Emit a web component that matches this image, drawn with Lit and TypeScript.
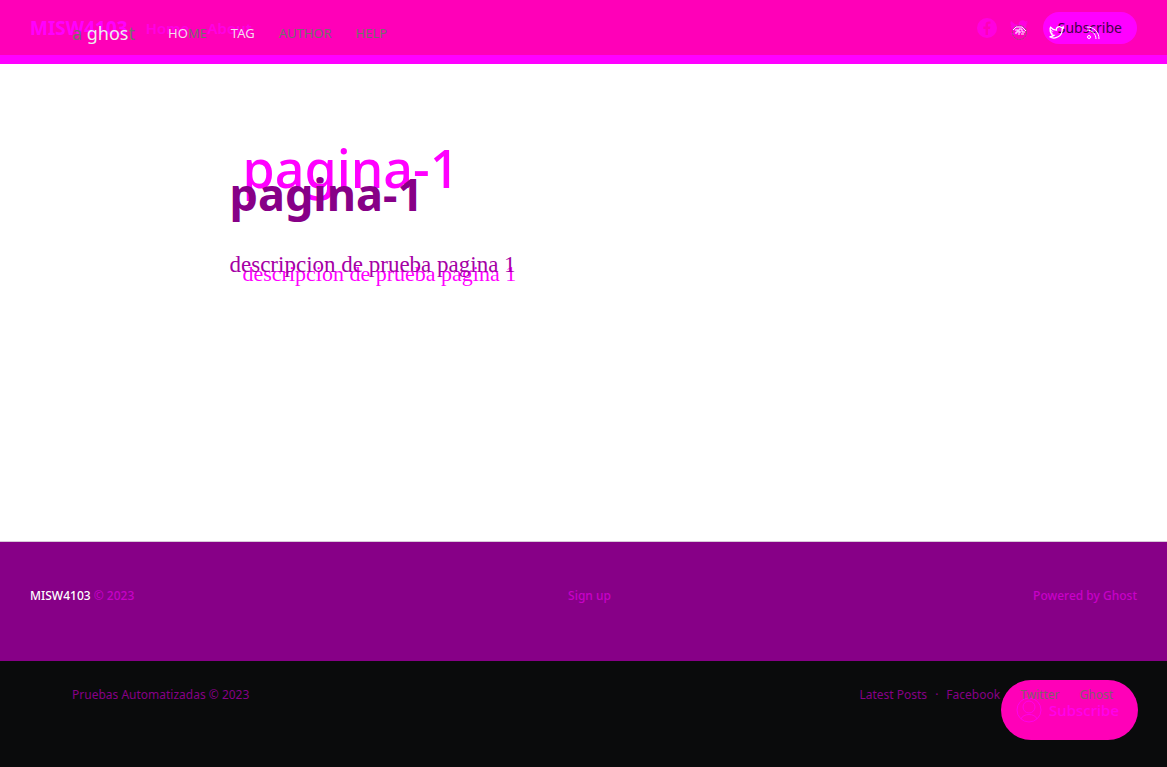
import { LitElement, html, css, svg } from "lit";
import { customElement } from "lit/decorators.js";

const bird = svg`<path d="M23 5a9 9 0 0 1-2.600.7 4.500 4.500 0 0 0 2-2.500 9 9 0 0 1-2.900 1.100 4.500 4.500 0 0 0-7.700 4.100A13 13 0 0 1 2.500 3.600a4.500 4.500 0 0 0 1.400 6 4.500 4.500 0 0 1-2-.6 4.500 4.500 0 0 0 3.600 4.500 4.500 4.500 0 0 1-2 .1 4.500 4.500 0 0 0 4.200 3.100A9 9 0 0 1 1 18.600 13 13 0 0 0 21 7a9 9 0 0 0 2-2z"/>`;

@customElement("app-root")
export class AppRoot extends LitElement {
  static styles = css`
    :host {
      display: flex;
      flex-direction: column;
      min-height: 100vh;
      background: #fff;
      font-family: "Noto Sans", "Open Sans", sans-serif;
      font-size: 12px;
      line-height: 20px;
    }
    a { color: inherit; text-decoration: none; }
    button { border: 0; font-family: inherit; cursor: pointer; }
    svg { display: block; }
    .stack { display: grid; grid-template-columns: minmax(0, 1fr); }
    .stack > * { grid-area: 1 / 1; }
    .top { height: 55px; background: #ff00b8; border-bottom: 9px solid #f0f; }
    .bar { display: flex; align-items: center; }
    .site { padding: 0 30px; color: #f0f; font-size: 15px; font-weight: 600; }
    .site .brand { font-size: 19px; font-weight: 700; margin-right: 18px; }
    .site nav { display: flex; gap: 18px; flex: 1; color: #ff00e4; }
    .site .social { display: flex; align-items: center; gap: 12px; margin-right: 14px; color: #ff00e0; }
    .join { height: 32px; padding: 0 15px; border-radius: 16px; background: #f0f; color: #45004a; font-size: 14px; }
    .overlay { padding: 10px 66px 0 72px; color: #73706c; pointer-events: none; font-size: 13px; }
    .overlay .mark { width: 64px; margin-right: 32px; font-size: 18px; color: #eee; }
    .overlay .dim { color: #73706c; }
    .overlay nav { display: flex; gap: 24px; flex: 1; }
    .overlay .lit { color: #f4dcec; }
    .overlay .social { display: flex; gap: 22px; color: #fff; }
    main { flex: 1; }
    .page { box-sizing: border-box; width: 100%; max-width: 708px; margin: 0 auto; }
    h1, p { margin: 0; }
    .back { padding: 72px 0 0 13px; color: #f0f; }
    .back h1 { font-size: 52px; line-height: 64px; font-weight: 500; }
    .back p { margin-top: 62px; }
    .front { padding: 100px 0 0; color: #870087; }
    .front h1 { font-size: 45px; line-height: 60px; font-weight: 700; }
    .front p { margin-top: 29px; color: #a500a5; }
    .page p { font-family: "Liberation Serif", serif; font-size: 23px; line-height: 24px; }
    .back p.text { font-size: 22px; }
    .foot {
      display: grid;
      grid-template-columns: 1fr auto 1fr;
      padding: 44px 30px 55px;
      border-top: 1px solid #d8c8d8;
      background: #870087;
      color: #c800c8;
      font-weight: 500;
    }
    .foot .name { color: #fff; }
    .foot .mid { padding-left: 12px; }
    .foot .end { text-align: right; }
    .base { min-height: 106px; background: #0a0b0c; }
    .links { display: flex; align-items: flex-start; padding: 24px 54px 0 72px; color: #870087; }
    .links .copy { flex: 1; }
    .links ul { display: flex; gap: 20px; margin: 0; padding: 0; list-style: none; position: relative; z-index: 1; }
    .links .dim { color: #80606c; }
    .links li:first-child { display: flex; gap: 8px; margin-right: -12px; }
    .float {
      justify-self: end;
      align-self: start;
      display: flex;
      align-items: center;
      gap: 7px;
      height: 60px;
      margin: 19px 29px 0 0;
      padding: 0 19px 0 15px;
      border-radius: 30px;
      background: #ff00b8;
      color: #ff00ec;
      font-size: 15px;
      font-weight: 500;
    }
  `;

  render() {
    return html`
      <header class="top stack">
        <div class="bar site">
          <a class="brand" href="#">MISW4103</a>
          <nav><a href="#">Home</a><a href="#">About</a></nav>
          <div class="social">
            <a href="#" aria-label="Facebook"><svg width="20" height="20" viewBox="0 0 20 20" fill="currentColor"><circle cx="10" cy="10" r="10"/><path fill="#ff00b8" d="M8.500 17v-6H6.300V8.500h2.200V6.700C8.500 4.500 9.800 3.400 11.700 3.400l1.800.1v2.200h-1.200c-1 0-1.300.5-1.300 1.200v1.600h2.400L13 11h-2v6z"/></svg></a>
            <a href="#" aria-label="Twitter"><svg width="20" height="20" viewBox="0 0 24 24" fill="currentColor">${bird}</svg></a>
          </div>
          <button class="join">Subscribe</button>
        </div>
        <div class="bar overlay">
          <a class="mark" href="#"><span class="dim">a</span> ghos<span class="dim">t</span></a>
          <nav>
            <a href="#"><span class="lit">HO</span>ME</a>
            <a class="lit" href="#">TAG</a>
            <a href="#">AUTHOR</a>
            <a href="#">HELP</a>
          </nav>
          <div class="social">
            <a href="#" aria-label="Facebook"><svg width="15" height="15" viewBox="0 0 15 15" fill="none" stroke="currentColor"><circle cx="7.500" cy="7.500" r="7" stroke="#83606f" stroke-dasharray="2 1"/><path d="M1 5l3-3h6l4 4M3 5h3v2H4v2M7 10V7h2M7 7V4h3v3h3M9 9h3"/></svg></a>
            <a href="#" aria-label="Twitter"><svg width="15" height="15" viewBox="0 0 24 24" fill="none" stroke="currentColor" stroke-width="2">${bird}</svg></a>
            <a href="#" aria-label="RSS"><svg width="15" height="15" viewBox="0 0 15 15" fill="none" stroke="currentColor"><path d="M1 2c7 0 12 5 12 12M1 5c5 0 9 4 9 9"/><circle cx="3" cy="12" r="1.500"/></svg></a>
          </div>
        </div>
      </header>
      <main>
        <article class="page stack">
          <div class="back"><h1>pagina-1</h1><p class="text">descripcion de prueba pagina 1</p></div>
          <div class="front"><h1>pagina-1</h1><p>descripcion de prueba pagina 1</p></div>
        </article>
      </main>
      <footer>
        <div class="foot">
          <span><span class="name">MISW4103</span> © 2023</span>
          <a class="mid" href="#">Sign up</a>
          <a class="end" href="#">Powered by Ghost</a>
        </div>
        <div class="base stack">
          <button class="float">
            <svg width="26" height="26" viewBox="0 0 26 26" fill="none" stroke="currentColor"><circle cx="13" cy="13" r="12"/><circle cx="13" cy="10" r="6"/><path d="M5 22c2-6 14-6 16 0"/></svg>
            Subscribe
          </button>
          <div class="links">
            <span class="copy">Pruebas Automatizadas © 2023</span>
            <ul>
              <li><a href="#">Latest Posts</a><span>·</span></li>
              <li><a href="#">Facebook</a></li>
              <li class="dim"><a href="#">Twitter</a></li>
              <li class="dim"><a href="#">Ghost</a></li>
            </ul>
          </div>
        </div>
      </footer>
    `;
  }
}
